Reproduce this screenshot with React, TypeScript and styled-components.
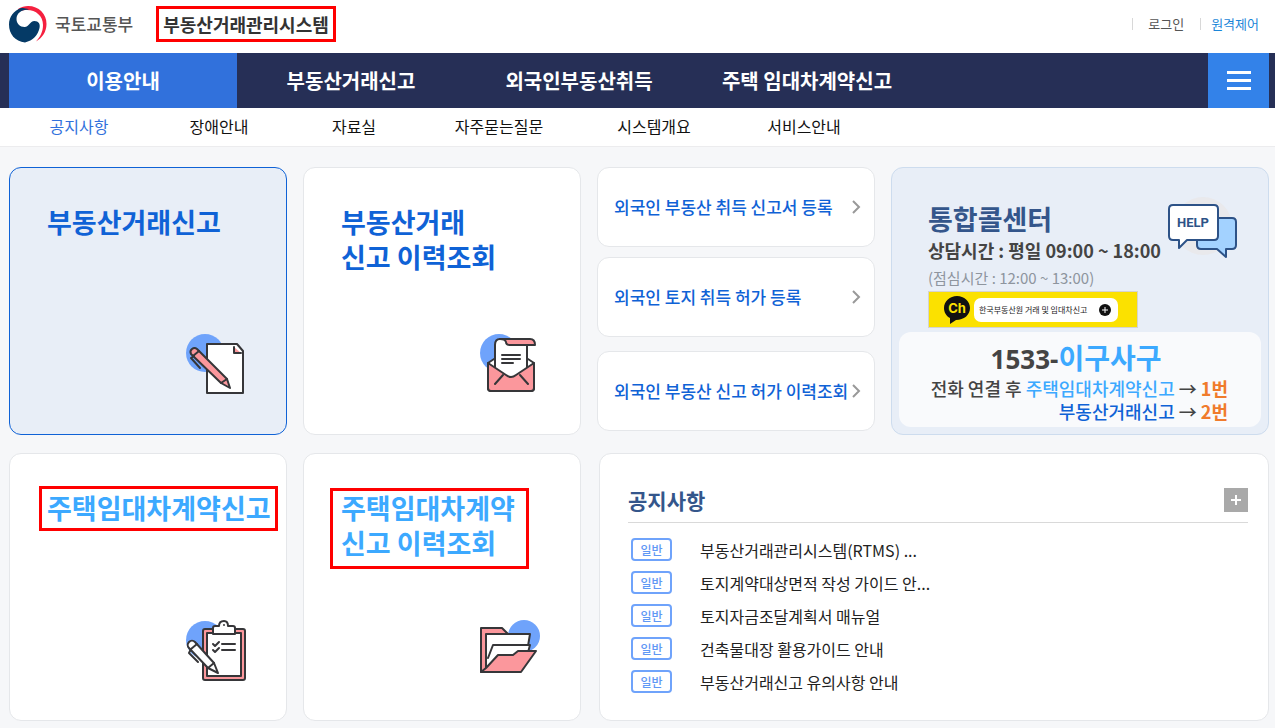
import React from 'react';
import styled, { createGlobalStyle, css } from 'styled-components';

const GlobalStyle = createGlobalStyle`
  *, *::before, *::after { box-sizing: border-box; }
  body {
    margin: 0;
    background: #f6f7f9;
    color: #222;
    font-family: 'Noto Sans CJK KR', 'Noto Sans', sans-serif;
    font-size: 16px;
    line-height: 24px;
  }
  a { color: inherit; text-decoration: none; }
  h1, h2, p, ul { margin: 0; padding: 0; }
  ul { list-style: none; }
  button { font: inherit; border: 0; padding: 0; cursor: pointer; }
`;

const Header = styled.header`
  display: flex;
  align-items: center;
  height: 53px;
  padding: 0 16px 5px 9px;
  background: #fff;
`;

const Ministry = styled.a`
  display: flex;
  align-items: center;
  gap: 8px;
  color: #555;
  font-size: 17px;
  font-weight: 500;
`;

const marked = css`
  outline: 3px solid #f00;
  outline-offset: -3px;
`;

const SystemName = styled.h1`
  ${marked}
  margin-left: 23px;
  padding: 6px 7px;
  color: #333;
  font-size: 18px;
  line-height: 24px;
`;

const UtilityMenu = styled.nav`
  display: flex;
  align-items: center;
  margin-left: auto;
  font-size: 13px;
  line-height: 12px;
`;

const UtilityLink = styled.a<{ $accent?: boolean }>`
  padding-left: ${p => (p.$accent ? 10 : 15)}px;
  margin-right: ${p => (p.$accent ? 0 : 16)}px;
  border-left: 1px solid #d8d8d8;
  color: ${p => (p.$accent ? '#1a86d8' : '#555')};
`;

const MainNav = styled.nav`
  display: flex;
  height: 55px;
  padding: 0 6px 0 9px;
  background: #262f56;
`;

const MainLink = styled.a<{ $active?: boolean }>`
  display: flex;
  flex: 0 1 228px;
  align-items: center;
  justify-content: center;
  background: ${p => (p.$active ? '#3171dc' : 'transparent')};
  color: #fff;
  font-size: 20px;
  font-weight: 700;
  white-space: nowrap;
`;

const MenuButton = styled.button`
  display: flex;
  align-items: center;
  justify-content: center;
  width: 61px;
  margin-left: auto;
  background: #3382e9;
`;

const SubNav = styled.nav`
  display: flex;
  height: 39px;
  padding: 0 9px;
  border-bottom: 1px solid #ececee;
  background: #fff;
  color: #111;
  line-height: 36px;
  text-align: center;
  white-space: nowrap;
`;

const SubLink = styled.a<{ $active?: boolean; $width: number }>`
  flex: 0 1 ${p => p.$width}px;
  color: ${p => (p.$active ? '#3171dc' : 'inherit')};
`;

const Main = styled.main`
  display: grid;
  grid-template-columns: repeat(3, minmax(0, 278fr)) minmax(0, 378fr);
  grid-auto-rows: minmax(268px, auto);
  gap: 18px 16px;
  padding: 20px 6px 7px 9px;
`;

const card = css`
  border: 1px solid #e5e7ea;
  border-radius: 12px;
  background: #fff;
`;

const ServiceCard = styled.a<{ $selected?: boolean; $light?: boolean }>`
  ${card}
  display: flex;
  flex-direction: column;
  justify-content: space-between;
  padding: 36px 0 36px 37px;
  color: ${p => (p.$light ? '#3ca9ff' : '#0f62d6')};
  ${p => p.$selected && css`
    border-color: #0f62d6;
    background: #e8eef7;
  `}
`;

const ServiceTitle = styled.h2<{ $mark?: 'tight' | 'loose' }>`
  align-self: flex-start;
  font-size: 27px;
  line-height: 35px;
  white-space: nowrap;
  ${p => p.$mark && marked}
  ${p => p.$mark === 'tight' && css`
    margin: -4px 0 0 -8px;
    padding: 4px 7px 6px 8px;
  `}
  ${p => p.$mark === 'loose' && css`
    margin: -2px 0 0 -11px;
    padding: 2px 14px 9px 11px;
  `}
`;

const ServiceIcon = styled.svg`
  align-self: flex-end;
  margin-right: 36px;
`;

const LinkStack = styled.div`
  display: flex;
  flex-direction: column;
  gap: 10px;
  padding-bottom: 4px;
`;

const LinkCard = styled.a`
  ${card}
  display: flex;
  align-items: center;
  justify-content: space-between;
  height: 80px;
  padding: 0 13px 0 16px;
  color: #0f62d6;
  font-size: 17px;
  font-weight: 500;
  white-space: nowrap;

  &:last-child { margin-top: auto; }
`;

const CallCenter = styled.section`
  ${card}
  display: flex;
  flex-direction: column;
  padding: 28px 7px 7px;
  border-color: #cddcee;
  background: #e8eef7;
`;

const CallHead = styled.div`
  display: flex;
  justify-content: space-between;
  padding: 0 23px 0 29px;
  white-space: nowrap;
`;

const CallText = styled.div`
  padding-top: 6px;
`;

const CallTitle = styled.h2`
  color: #34568b;
  font-size: 27px;
  line-height: 34px;
`;

const Hours = styled.p`
  color: #444;
  font-size: 18px;
  font-weight: 700;
  line-height: 28px;
`;

const Lunch = styled.p`
  color: #8e959e;
  font-size: 15px;
  line-height: 27px;
`;

const KakaoBanner = styled.a`
  display: flex;
  align-items: center;
  gap: 4px;
  width: 210px;
  height: 37px;
  margin-left: 29px;
  padding-left: 15px;
  border: 1px solid #d5d3cf;
  background: #fbe100;
`;

const KakaoPill = styled.span`
  display: flex;
  align-items: center;
  justify-content: space-between;
  width: 144px;
  height: 24px;
  padding: 0 7px 0 5px;
  border-radius: 7px;
  background: #fff;
  color: #222;
  font-size: 8px;
  white-space: nowrap;
`;

const PhonePanel = styled.div`
  flex: 1;
  margin-top: 4px;
  padding: 8px 33px 0 0;
  border-radius: 12px;
  background: #f9fafc;
  color: #444;
  font-size: 18px;
  font-weight: 500;
  line-height: 23px;
  text-align: right;
  white-space: nowrap;
`;

const PhoneNumber = styled.p`
  display: flex;
  align-items: baseline;
  justify-content: center;
  height: 37px;
  padding-left: 25px;
  font-family: 'Noto Sans', 'Noto Sans CJK KR', sans-serif;
  font-size: 26px;
  font-weight: 700;
  line-height: 36px;
`;

const PhoneWord = styled.span`
  color: #3ca9ff;
  font-size: 28px;
`;

const Tint = styled.span<{ $color: string; $bold?: boolean }>`
  display: inline-block;
  color: ${p => p.$color};
  font-weight: ${p => (p.$bold ? 700 : 'inherit')};
`;

const Notices = styled.section`
  ${card}
  grid-column: 3 / 5;
  margin-left: 2px;
  padding: 24px 20px 20px 28px;
`;

const NoticeHead = styled.div`
  display: flex;
  align-items: center;
  justify-content: space-between;
  height: 45px;
  border-bottom: 1px solid #d9d9d9;
`;

const NoticeTitle = styled.h2`
  color: #34568b;
  font-size: 21px;
`;

const MoreButton = styled.button`
  display: flex;
  align-items: center;
  justify-content: center;
  width: 24px;
  height: 24px;
  background: #a9a9a9;
`;

const NoticeList = styled.ul`
  padding-top: 10px;
`;

const NoticeRow = styled.li`
  display: flex;
  align-items: center;
  gap: 28px;
  height: 33px;
  padding-left: 3px;
`;

const Badge = styled.span`
  width: 41px;
  border: 2px solid #6fa3fb;
  border-radius: 4px;
  color: #5f98f5;
  font-size: 12px;
  font-weight: 500;
  line-height: 19px;
  text-align: center;
`;

const outline = { stroke: '#363639', strokeWidth: 2, strokeLinejoin: 'round', strokeLinecap: 'round' } as const;

const Emblem = () => (
  <svg width="38" height="37" viewBox="0 0 38 37" aria-hidden="true">
    <path d="M9 3C12 1 16 0 19 0C30 0 37.5 8 37.5 18C37.5 26 33 32 27 35.5C31 31 34 26 34 19C34 10 27 4 18 4C15 4 12 4.5 9 6Z" fill="#f5203f" />
    <path d="M12 2C15 2 18 2.500 20 3.500C12 3.500 7.500 7.500 7.500 13C7.500 17.500 11 21 15.500 21C20.500 21 20.500 15 25.500 15C29.500 15 31.500 18 30.500 22C29 29 24 34.500 16 36.500C6 35.500 0 28 0 18.500C0 11 4.500 5 12 2Z" fill="#053a66" />
  </svg>
);

/* Every drawing shares one 64px box; the blue disc sits behind the object. */
const drawings: Record<string, React.ReactNode> = {
  paper: (
    <>
      <circle cx="19" cy="19" r="19" fill="#6fa3fb" />
      <path d="M21 10H51L57 17V59H21Z" fill="#fff" {...outline} />
      <path d="M48 13V19H55Z" fill="#fb979c" />
      <path d="M48 13V19H55" {...outline} />
      <path d="M5 20A4 4 0 0 1 11 15L41 45L44 54L35 49Z" fill="#fb979c" {...outline} />
      <path d="M35 49L41 45M7 22L13 17M5 24L14 34M5 24L8 22" {...outline} />
    </>
  ),
  letter: (
    <>
      <circle cx="19" cy="19" r="19" fill="#6fa3fb" />
      <path d="M14 25L8 29V54Q8 57 11 57H51Q54 57 54 54V29L48 25" fill="#fff" {...outline} />
      <path d="M15 37V11Q15 5 20 5H47V37L31 47Z" fill="#fff" {...outline} />
      <path d="M20 5H50Q55 5 55 11H30Q26 11 26 8Q25 5 20 5Z" fill="#fb979c" {...outline} />
      <path d="M8 29L26 41Q31 45 36 41L54 29V54Q54 57 51 57H11Q8 57 8 54Z" fill="#fb979c" {...outline} />
      <path d="M15 50L23 41M48 50L40 41M22 21H40M22 25H40M22 29H33" {...outline} />
    </>
  ),
  clipboard: (
    <>
      <circle cx="22" cy="20" r="19" fill="#6fa3fb" transform="translate(-3 0)" />
      <rect x="17" y="9" width="42" height="51" rx="2" fill="#fb979c" {...outline} />
      <path d="M21 13H55V56H21Z" fill="#fff" {...outline} />
      <path d="M27 14V8Q27 6 29 6H33Q33 1 38 1Q42 1 42 6H47Q49 6 49 8V14Z" fill="#fff" {...outline} />
      <circle cx="38" cy="5" r="1" fill="#363639" />
      <path d="M27 24L29 26L33 22M27 30L29 32L33 28M36 24H49M36 30H49" {...outline} />
      <path d="M3 28A4 4 0 0 1 9 22L28 43L32 53L22 48Z" fill="#fff" {...outline} />
      <path d="M5 29L11 24M22 48L28 43M3 33L12 42M3 33L5 29" {...outline} />
    </>
  ),
  folder: (
    <>
      <circle cx="44" cy="16" r="16" fill="#6fa3fb" />
      <path d="M1 8H22L28 14V52H1Z" fill="#fb979c" {...outline} />
      <path d="M6 14H50L45 44L6 48Z" fill="#fff" {...outline} />
      <path d="M8 38L13 25H50L46 40" fill="#fff" {...outline} />
      <path d="M1 52L6 48L18 35H33L38 31H56L41 52Z" fill="#fb979c" {...outline} />
    </>
  ),
};

const Drawing = ({ name }: { name: string }) => (
  <ServiceIcon width="64" height="64" viewBox="0 0 64 64" fill="none" aria-hidden="true">
    {drawings[name]}
  </ServiceIcon>
);

const HelpIcon = () => (
  <svg width="70" height="64" viewBox="0 0 70 64" aria-hidden="true">
    <circle cx="35" cy="30" r="29" fill="#e9e9ec" />
    <path d="M33 22H64Q68 22 68 26V49Q68 53 64 53H58V61L49 53H33Q29 53 29 49V26Q29 22 33 22Z" fill="#a3d2ff" stroke="#2d5287" strokeWidth="2" strokeLinejoin="round" />
    <path d="M5 9H46Q50 9 50 13V40Q50 44 46 44H19L11 52V44H5Q1 44 1 40V13Q1 9 5 9Z" fill="#fff" stroke="#2d5287" strokeWidth="2" strokeLinejoin="round" />
    <text x="25" y="31" textAnchor="middle" fontFamily="'Liberation Sans Narrow', Roboto, sans-serif" fontSize="13" fontWeight="700" fill="#2d5287">HELP</text>
  </svg>
);

const KakaoChannel = () => (
  <svg width="26" height="28" viewBox="0 0 26 28" aria-hidden="true">
    <path d="M13 0C20 0 26 5 26 12C26 19 20 24 12 24L6 28V22C2 20 0 16 0 12C0 5 6 0 13 0Z" fill="#111" />
    <text x="13" y="17" textAnchor="middle" fontFamily="Inter, sans-serif" fontSize="13" fontWeight="700" fill="#fbe100">Ch</text>
  </svg>
);

type Service = { lines: string[]; icon: string; selected?: boolean; light?: boolean; mark?: 'tight' | 'loose' };

const sales: Service[] = [
  { lines: ['부동산거래신고'], icon: 'paper', selected: true },
  { lines: ['부동산거래', '신고 이력조회'], icon: 'letter' },
];

const rentals: Service[] = [
  { lines: ['주택임대차계약신고'], icon: 'clipboard', light: true, mark: 'tight' },
  { lines: ['주택임대차계약', '신고 이력조회'], icon: 'folder', light: true, mark: 'loose' },
];

const foreigners = [
  '외국인 부동산 취득 신고서 등록',
  '외국인 토지 취득 허가 등록',
  '외국인 부동산 신고 허가 이력조회',
];

const notices = [
  '부동산거래관리시스템(RTMS) ...',
  '토지계약대상면적 작성 가이드 안...',
  '토지자금조달계획서 매뉴얼',
  '건축물대장 활용가이드 안내',
  '부동산거래신고 유의사항 안내',
];

const ServiceTile = ({ lines, icon, selected, light, mark }: Service) => (
  <ServiceCard href="#" $selected={selected} $light={light}>
    <ServiceTitle $mark={mark}>
      {lines.map((line, i) => (
        <React.Fragment key={line}>{i > 0 && <br />}{line}</React.Fragment>
      ))}
    </ServiceTitle>
    <Drawing name={icon} />
  </ServiceCard>
);

export default function App() {
  return (
    <>
      <GlobalStyle />
      <Header>
        <Ministry href="#"><Emblem />국토교통부</Ministry>
        <SystemName>부동산거래관리시스템</SystemName>
        <UtilityMenu>
          <UtilityLink href="#">로그인</UtilityLink>
          <UtilityLink href="#" $accent>원격제어</UtilityLink>
        </UtilityMenu>
      </Header>
      <MainNav>
        <MainLink href="#" $active>이용안내</MainLink>
        <MainLink href="#">부동산거래신고</MainLink>
        <MainLink href="#">외국인부동산취득</MainLink>
        <MainLink href="#">주택 임대차계약신고</MainLink>
        <MenuButton aria-label="전체메뉴">
          <svg width="24" height="19" viewBox="0 0 24 19" aria-hidden="true">
            <path d="M0 0H24V3H0ZM0 8H24V11H0ZM0 16H24V19H0Z" fill="#fff" />
          </svg>
        </MenuButton>
      </MainNav>
      <SubNav>
        <SubLink href="#" $width={140} $active>공지사항</SubLink>
        <SubLink href="#" $width={140}>장애안내</SubLink>
        <SubLink href="#" $width={130}>자료실</SubLink>
        <SubLink href="#" $width={160}>자주묻는질문</SubLink>
        <SubLink href="#" $width={150}>시스템개요</SubLink>
        <SubLink href="#" $width={150}>서비스안내</SubLink>
      </SubNav>
      <Main>
        {sales.map(s => <ServiceTile key={s.icon} {...s} />)}
        <LinkStack>
          {foreigners.map(t => (
            <LinkCard href="#" key={t}>
              {t}
              <svg width="10" height="14" viewBox="0 0 10 14" fill="none" aria-hidden="true">
                <path d="M2 1L8 7L2 13" stroke="#999" strokeWidth="2" />
              </svg>
            </LinkCard>
          ))}
        </LinkStack>
        <CallCenter>
          <CallHead>
            <CallText>
              <CallTitle>통합콜센터</CallTitle>
              <Hours>상담시간 : 평일 09:00 ~ 18:00</Hours>
              <Lunch>(점심시간 : 12:00 ~ 13:00)</Lunch>
            </CallText>
            <HelpIcon />
          </CallHead>
          <KakaoBanner href="#">
            <KakaoChannel />
            <KakaoPill>
              한국부동산원 거래 및 임대차신고
              <svg width="12" height="12" viewBox="0 0 12 12" aria-hidden="true">
                <circle cx="6" cy="6" r="6" fill="#111" />
                <path d="M6 3V9M3 6H9" stroke="#fff" />
              </svg>
            </KakaoPill>
          </KakaoBanner>
          <PhonePanel>
            <PhoneNumber>1533-<PhoneWord>이구사구</PhoneWord></PhoneNumber>
            <p>전화 연결 후 <Tint $color="#3ca9ff">주택임대차계약신고</Tint> → <Tint $color="#f07b2c" $bold>1번</Tint></p>
            <p><Tint $color="#0f62d6">부동산거래신고</Tint> → <Tint $color="#f07b2c" $bold>2번</Tint></p>
          </PhonePanel>
        </CallCenter>
        {rentals.map(s => <ServiceTile key={s.icon} {...s} />)}
        <Notices>
          <NoticeHead>
            <NoticeTitle>공지사항</NoticeTitle>
            <MoreButton aria-label="공지사항 더보기">
              <svg width="10" height="10" viewBox="0 0 10 10" aria-hidden="true">
                <path d="M5 0V10M0 5H10" stroke="#fff" strokeWidth="2" />
              </svg>
            </MoreButton>
          </NoticeHead>
          <NoticeList>
            {notices.map(n => (
              <NoticeRow key={n}><Badge>일반</Badge><a href="#">{n}</a></NoticeRow>
            ))}
          </NoticeList>
        </Notices>
      </Main>
    </>
  );
}
